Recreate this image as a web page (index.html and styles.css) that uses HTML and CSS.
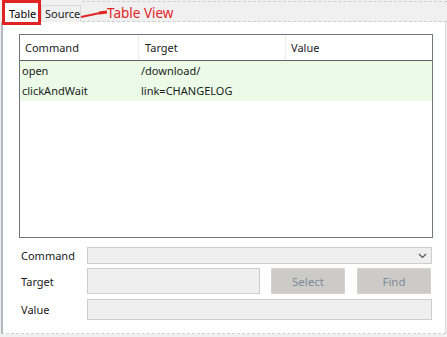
FILE: index.html
```html
<!DOCTYPE html>
<html lang="en">
<head>
    <meta charset="UTF-8">
    <title>Table View</title>
    <link rel="stylesheet" href="styles.css">
</head>
<body>

    <div class="tab-bar">
        <div class="tab active">Table</div>
        <div class="tab">Source</div>
        <div class="tab-rest"></div>

        <!-- annotation -->
        <div class="callout-box"></div>
        <svg class="callout-line" width="30" height="10" viewBox="0 0 30 10">
            <path d="M1 8 L20 4" stroke="#e02424" stroke-width="2" fill="none"/>
            <path d="M19 4 L27 3" stroke="#e02424" stroke-width="3" fill="none"/>
        </svg>
        <span class="callout-text">Table View</span>
    </div>

    <div class="panel">
        <div class="grid">
            <div class="grid-head">
                <div class="col col-cmd">Command</div>
                <div class="col col-target">Target</div>
                <div class="col col-value">Value</div>
            </div>
            <div class="grid-row">
                <div class="col col-cmd">open</div>
                <div class="col col-target">/download/</div>
                <div class="col col-value"></div>
            </div>
            <div class="grid-row">
                <div class="col col-cmd">clickAndWait</div>
                <div class="col col-target">link=CHANGELOG</div>
                <div class="col col-value"></div>
            </div>
        </div>

        <div class="form">
            <div class="form-row row-command">
                <label>Command</label>
                <div class="combo">
                    <svg width="9" height="6" viewBox="0 0 9 6">
                        <path d="M1 1 L4.5 4.5 L8 1" stroke="#555" stroke-width="1.2" fill="none"/>
                    </svg>
                </div>
            </div>
            <div class="form-row row-target">
                <label>Target</label>
                <div class="field field-target"></div>
                <button class="btn" disabled>Select</button>
                <button class="btn" disabled>Find</button>
            </div>
            <div class="form-row row-value">
                <label>Value</label>
                <div class="field field-value"></div>
            </div>
        </div>
    </div>

</body>
</html>
```

FILE: styles.css
```css
body {
    margin: 0;
    background-color: #f0f0f0;
    font-family: "Noto Sans", "Open Sans", sans-serif;
    font-size: 11px;
    color: #1b1b1b;
    width: 447px;
    height: 337px;
    overflow: hidden;
}
.tab-bar {
    position: relative;
    display: flex;
    align-items: flex-end;
    height: 22px;
}
.tab {
    box-sizing: border-box;
    height: 17px;
    width: 40px;
    line-height: 15px;
    padding: 0 0 0 3px;
    border: 1px solid #d9d9d9;
    border-bottom: none;
    background: #f0f0f0;
}
.tab.active {
    margin-left: 4px;
    height: 20px;
    width: 37px;
    padding: 3px 0 0 4px;
    background: #fff;
    color: #000;
}
.tab-rest {
    flex: 1;
    height: 21px;
    border-top: 1px dashed #cfcfcf;
    border-bottom: 1px dashed #cfcfcf;
    box-sizing: border-box;
    margin-left: 1px;
}
.callout-box {
    position: absolute;
    left: 2px;
    top: 0;
    width: 39px;
    height: 25px;
    box-sizing: border-box;
    border: 3px solid #e02424;
}
.callout-line {
    position: absolute;
    left: 80px;
    top: 9px;
}
.callout-text {
    position: absolute;
    left: 107px;
    top: 4px;
    font-size: 13.5px;
    color: #e02424;
    line-height: 18px;
}
.panel {
    box-sizing: border-box;
    margin-left: 1px;
    width: 445px;
    height: 312px;
    background: #fff;
    border-left: 2px solid #b4b8c0;
    border-right: 1px solid #dadada;
    border-bottom: 1px dashed #cfcfcf;
    padding: 12px 0 0 16px;
}
.grid {
    box-sizing: border-box;
    width: 414px;
    height: 204px;
    border: 1px solid #6f7781;
}
.grid-head {
    display: flex;
    height: 25px;
    border-bottom: 1px solid #5f6368;
    color: #222;
}
.grid-head .col {
    padding-left: 5px;
    line-height: 25px;
    border-right: 1px solid #ececec;
}
.grid-row {
    display: flex;
    height: 20px;
    line-height: 20px;
    background: #ebfbe8;
}
.grid-row .col {
    padding-left: 2px;
}
.col {
    box-sizing: border-box;
}
.col-cmd {
    width: 119px;
}
.col-target {
    width: 147px;
}
.col-value {
    flex: 1;
}
.grid-head .col-target {
    padding-left: 6px;
}
.grid-head .col-value {
    border-right: none;
}
.form {
    display: flex;
    flex-direction: column;
    padding-top: 9px;
}
.form-row {
    display: flex;
    align-items: center;
}
.form-row label {
    width: 66px;
    padding-left: 2px;
}
.combo,
.field {
    box-sizing: border-box;
    background: #efefef;
    border: 1px solid #cdcdcd;
}
.combo {
    width: 345px;
    height: 17px;
    display: flex;
    align-items: center;
    justify-content: flex-end;
    padding-right: 4px;
}
.row-target {
    margin-top: 4px;
}
.field-target {
    width: 173px;
    height: 26px;
}
.btn {
    box-sizing: border-box;
    margin-left: 11px;
    width: 74px;
    height: 26px;
    background: #cdcbc7;
    border: 1px dotted #dddbd7;
    color: #7d8b9b;
    font-family: inherit;
    font-size: 11.5px;
    padding: 0;
}
.btn + .btn {
    margin-left: 12px;
}
.row-value {
    margin-top: 5px;
}
.field-value {
    width: 345px;
    height: 21px;
}
```
